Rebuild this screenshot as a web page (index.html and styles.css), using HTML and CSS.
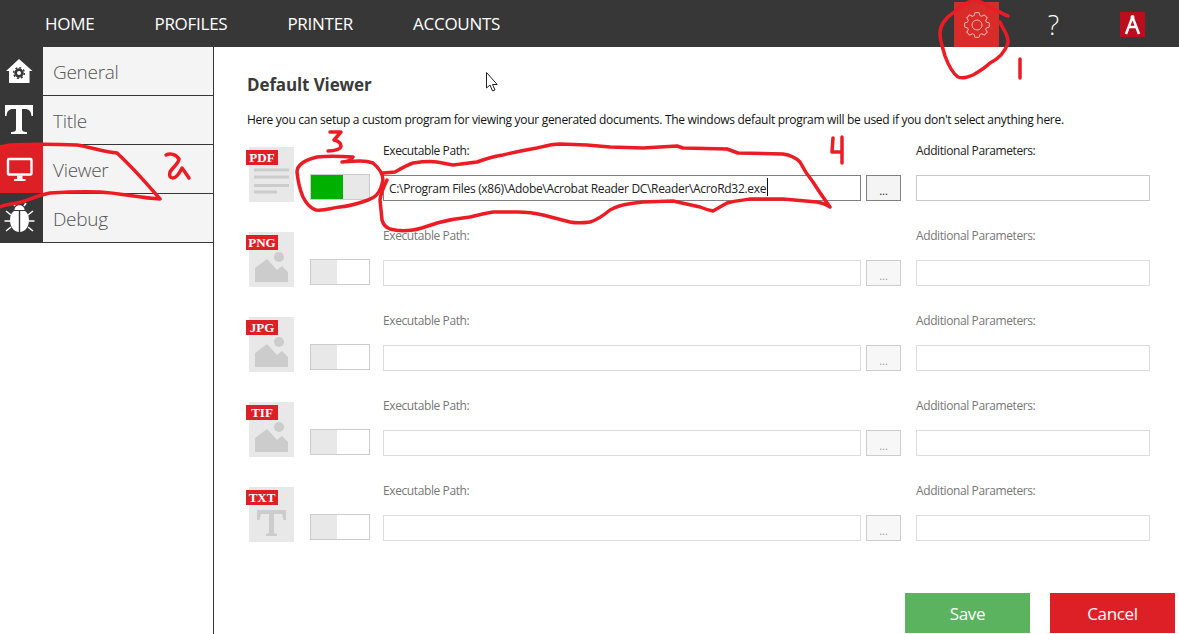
FILE: index.html
```html
<!DOCTYPE html>
<html lang="en">
<head>
<meta charset="utf-8">
<title>Default Viewer</title>
<link rel="stylesheet" href="styles.css">
</head>
<body>
<div class="app">
  <header class="topbar">
    <nav class="nav">
      <a class="nav-link">HOME</a>
      <a class="nav-link">PROFILES</a>
      <a class="nav-link">PRINTER</a>
      <a class="nav-link">ACCOUNTS</a>
    </nav>
    <div class="tools">
      <div class="gear-tile">
        <svg width="26" height="26" viewBox="-13 -13 26 26" class="gear">
          <defs><path id="tooth" d="M-2.87-9.37L-2.17-12.31H2.17L2.87-9.37A9.8 9.8 0 0 1 4.6-8.65"/></defs>
          <use href="#tooth"/>
          <use href="#tooth" transform="rotate(45)"/>
          <use href="#tooth" transform="rotate(90)"/>
          <use href="#tooth" transform="rotate(135)"/>
          <use href="#tooth" transform="rotate(180)"/>
          <use href="#tooth" transform="rotate(225)"/>
          <use href="#tooth" transform="rotate(270)"/>
          <use href="#tooth" transform="rotate(315)"/>
          <circle r="5"/>
        </svg>
      </div>
      <div class="help">?</div>
      <div class="logo">
        <svg width="25" height="25" viewBox="0 0 25 25">
          <path class="logo-a" d="M12.5 5L6 22M12.5 5L19 22M9 15H16"/>
          <circle cx="12.5" cy="5" r="2" fill="#fff"/>
        </svg>
      </div>
    </div>
  </header>
  <div class="body">
    <aside class="sidebar">
      <div class="side-item">
        <div class="side-icon">
          <svg width="43" height="48" viewBox="0 0 43 48">
            <path fill="#fff" d="M19 12L32.5 24H29.5V36H9V24H6Z"/>
            <circle cx="19" cy="26" r="4.2" fill="#373737" stroke="#373737" stroke-width="1"/>
            <circle cx="19" cy="26" r="5.4" fill="none" stroke="#373737" stroke-width="1.4" stroke-dasharray="2 2.2"/>
            <circle cx="19" cy="26" r="2" fill="#fff"/>
          </svg>
        </div>
        <span class="side-label">General</span>
      </div>
      <div class="side-item">
        <div class="side-icon">
          <svg width="43" height="48" viewBox="0 0 43 48">
            <path fill="#fff" d="M5 9H33V20H31.5C31 15 29 13 25 13H22V33C22 35 23 36 27 36V38H11V36C15 36 16 35 16 33V13H13C9 13 7 15 6.5 20H5Z"/>
          </svg>
        </div>
        <span class="side-label">Title</span>
      </div>
      <div class="side-item">
        <div class="side-icon is-active">
          <svg width="43" height="48" viewBox="0 0 43 48">
            <rect x="8" y="14" width="23.5" height="15.5" rx="1" fill="none" stroke="#fff" stroke-width="2.4"/>
            <path fill="#fff" d="M17 30.5H22.5V34H25.5V36H14V34H17Z"/>
          </svg>
        </div>
        <span class="side-label">Viewer</span>
      </div>
      <div class="side-item">
        <div class="side-icon">
          <svg width="43" height="48" viewBox="0 0 43 48">
            <path stroke="#fff" stroke-width="1.6" fill="none" d="M11 21L6 17M10 27H4.5M11 33L6 37M28 21L33 17M29 27H34.5M28 33L33 37M15 12L13 9M24 12L26 9"/>
            <path fill="#fff" d="M14.5 16C14.5 9.5 24.5 9.5 24.5 16Z"/>
            <path fill="#fff" d="M18.8 17V38C13 37.5 10 32 10 26C10 21.5 11.5 18.5 14 17ZM20.2 17V38C26 37.5 29 32 29 26C29 21.5 27.5 18.5 25 17Z"/>
          </svg>
        </div>
        <span class="side-label">Debug</span>
      </div>
    </aside>
    <main class="main">
      <h1 class="title">Default Viewer</h1>
      <p class="intro">Here you can setup a custom program for viewing your generated documents. The windows default program will be used if you don't select anything here.</p>

      <section class="row">
        <div class="tile">
          <span class="badge">PDF</span>
          <svg width="45" height="55" viewBox="0 0 45 55">
            <path class="tile-art" d="M5 21.500H40V24.500H5ZM5 28.500H40V31.500H5ZM5 37H40V40H5ZM5 43.500H28V46.500H5Z"/>
          </svg>
        </div>
        <div class="switch is-on"><span class="switch-thumb"></span></div>
        <div class="path-col">
          <label class="field-label">Executable Path:</label>
          <div class="path-line">
            <input class="field field-path" value="C:\Program Files (x86)\Adobe\Acrobat Reader DC\Reader\AcroRd32.exe">
            <button class="browse">...</button>
          </div>
        </div>
        <div class="param-col">
          <label class="field-label">Additional Parameters:</label>
          <input class="field field-param">
        </div>
      </section>

      <section class="row is-off">
        <div class="tile">
          <span class="badge">PNG</span>
          <svg width="45" height="55" viewBox="0 0 45 55">
            <circle class="tile-art" cx="30" cy="25" r="5"/>
            <path class="tile-art" d="M6 50V36L18 27L28 38L33 34L39 40V50Z"/>
          </svg>
        </div>
        <div class="switch"><span class="switch-thumb"></span></div>
        <div class="path-col">
          <label class="field-label">Executable Path:</label>
          <div class="path-line">
            <input class="field field-path">
            <button class="browse">...</button>
          </div>
        </div>
        <div class="param-col">
          <label class="field-label">Additional Parameters:</label>
          <input class="field field-param">
        </div>
      </section>

      <section class="row is-off">
        <div class="tile">
          <span class="badge">JPG</span>
          <svg width="45" height="55" viewBox="0 0 45 55">
            <circle class="tile-art" cx="30" cy="25" r="5"/>
            <path class="tile-art" d="M6 50V36L18 27L28 38L33 34L39 40V50Z"/>
          </svg>
        </div>
        <div class="switch"><span class="switch-thumb"></span></div>
        <div class="path-col">
          <label class="field-label">Executable Path:</label>
          <div class="path-line">
            <input class="field field-path">
            <button class="browse">...</button>
          </div>
        </div>
        <div class="param-col">
          <label class="field-label">Additional Parameters:</label>
          <input class="field field-param">
        </div>
      </section>

      <section class="row is-off">
        <div class="tile">
          <span class="badge">TIF</span>
          <svg width="45" height="55" viewBox="0 0 45 55">
            <circle class="tile-art" cx="30" cy="25" r="5"/>
            <path class="tile-art" d="M6 50V36L18 27L28 38L33 34L39 40V50Z"/>
          </svg>
        </div>
        <div class="switch"><span class="switch-thumb"></span></div>
        <div class="path-col">
          <label class="field-label">Executable Path:</label>
          <div class="path-line">
            <input class="field field-path">
            <button class="browse">...</button>
          </div>
        </div>
        <div class="param-col">
          <label class="field-label">Additional Parameters:</label>
          <input class="field field-param">
        </div>
      </section>

      <section class="row is-off">
        <div class="tile">
          <span class="badge">TXT</span>
          <svg width="45" height="55" viewBox="0 0 45 55">
            <path class="tile-art" d="M8 23H37V33H34.500L33 27H25V46L28 47V49H17V47L20 46V27H12L10.500 33H8Z"/>
          </svg>
        </div>
        <div class="switch"><span class="switch-thumb"></span></div>
        <div class="path-col">
          <label class="field-label">Executable Path:</label>
          <div class="path-line">
            <input class="field field-path">
            <button class="browse">...</button>
          </div>
        </div>
        <div class="param-col">
          <label class="field-label">Additional Parameters:</label>
          <input class="field field-param">
        </div>
      </section>

      <footer class="actions">
        <button class="action action-save">Save</button>
        <button class="action action-cancel">Cancel</button>
      </footer>
    </main>
  </div>
</div>

<svg class="markup" width="1179" height="634" viewBox="0 0 1179 634">
  <g class="ink">
    <path d="M1008 16C998 12 985 3 975 0C965 2 958 9 953 13C945 18 940 26 940 33C940 42 943 48 945 56C948 64 952 73 958 77C963 79 968 77 973 75C980 71 985 68 990 63C998 59 1005 52 1008 43C1009 35 1003 30 1000 22"/>
    <path d="M1020 59V78"/>
    <path d="M0 147L10 145C30 144 55 144 77 145C90 147 105 152 117 153C130 165 148 185 160 199C140 198 120 193 100 192C80 191 65 192 50 193C35 196 25 202 17 203C10 204 4 205 0 207"/>
    <path d="M166 155C170 153 176 154 179 159C179 163 173 167 170 172C169 176 170 178 173 178C177 178 180 172 182 168C185 172 187 175 189 178"/>
    <path d="M330 132H341L334 140C338 141 341 143 341 146C341 149 335 151 328 151"/>
    <path d="M342 162C345 162 350 161 353 157C340 156 325 156 317 157C305 160 297 164 297 172C298 182 300 190 303 197C306 203 310 208 316 210C325 211 330 208 340 207C350 206 360 203 368 200C374 198 380 195 383 180C383 174 379 168 373 163C365 160 355 161 342 162"/>
    <path d="M383 173L395 172C402 168 407 165 413 163C420 162 430 161 437 162L453 165C460 164 470 163 477 162C485 159 495 156 503 155C515 152 525 150 537 148C545 146 552 144 560 144L587 145L610 147L643 148L677 146L683 148L727 149L738 153L783 154C790 155 796 158 800 162C804 170 808 176 813 182C818 190 825 200 830 207C826 204 822 203 817 202L783 199H750C743 200 735 201 727 203L713 211C708 210 705 209 700 207L673 201L643 202C635 203 628 204 623 205C618 206 614 208 610 210C604 215 597 220 590 222C583 223 575 223 570 222L543 215C535 213 526 212 517 212H493C486 213 478 215 470 217C460 218 448 220 437 223C428 226 420 229 413 230C405 231 397 231 390 229C385 227 383 224 382 220L380 200C381 193 384 186 387 180"/>
    <path d="M833 138L832 152H842M842 137V163"/>
  </g>
  <path class="caret" d="M767.500 178V196"/>
  <path class="pointer" d="M486.500 72.500V88L490 85L492.500 91L495 90L492.500 84.500H497.200Z"/>
</svg>
</body>
</html>
```

FILE: styles.css
```css
* { box-sizing: border-box; }
html, body { margin: 0; height: 100%; }
body {
  font-family: "Open Sans", "Noto Sans", "Liberation Sans", sans-serif;
  background: #fff;
  color: #222;
  overflow: hidden;
}
.app { display: flex; flex-direction: column; height: 634px; }

.topbar {
  height: 47px;
  flex: none;
  display: flex;
  background: #373737;
  color: #fff;
}
.nav { display: flex; align-items: center; gap: 60px; padding-left: 45px; }
.nav-link { font-size: 17px; letter-spacing: -0.27px; }
.tools { margin-left: auto; display: flex; padding-right: 34px; }
.gear-tile {
  width: 45px;
  height: 45px;
  margin-top: 2px;
  background: #d92b27;
  display: flex;
  align-items: center;
  justify-content: center;
}
.gear { fill: none; stroke: #efb5b3; stroke-width: 1; }
.help {
  width: 109px;
  text-align: center;
  font-size: 27px;
  font-weight: 300;
  line-height: 50px;
}
.logo {
  width: 25px;
  height: 25px;
  margin: 12px 0 0 12px;
  background: #bb0d1e;
}
.logo svg { display: block; }
.logo-a { fill: none; stroke: #fff; stroke-width: 2.5; }

.body { flex: 1; display: flex; min-height: 0; }
.sidebar { width: 214px; flex: none; border-right: 1px solid #373737; }
.side-item {
  height: 49px;
  display: flex;
  align-items: center;
  background: #f4f4f4;
  border-bottom: 1px solid #373737;
}
.side-icon { width: 43px; height: 48px; background: #373737; flex: none; }
.side-icon svg { display: block; }
.side-icon.is-active { background: #dd1f26; }
.side-label {
  margin-left: 10px;
  padding-top: 2px;
  font-size: 19px;
  font-weight: 300;
  letter-spacing: -0.3px;
  color: #555;
}

.main { flex: 1; min-width: 0; display: flex; flex-direction: column; padding: 0 29px 1px 33px; }
.title {
  margin: 26px 0 0;
  height: 24px;
  line-height: 24px;
  font-size: 17px;
  font-weight: 700;
  letter-spacing: -0.12px;
  color: #3a3a3a;
}
.intro {
  margin: 14px 0 0;
  height: 18px;
  line-height: 18px;
  font-size: 12px;
  letter-spacing: -0.3px;
  color: #111;
  white-space: nowrap;
}

.row { height: 85px; flex: none; display: flex; padding-left: 2px; }
.row:first-of-type { margin-top: 18px; }
.tile { position: relative; width: 45px; height: 55px; background: #e8e8e8; flex: none; }
.tile svg { display: block; }
.tile-art { fill: #ccc; }
.badge {
  position: absolute;
  left: -3px;
  top: 3px;
  width: 32px;
  height: 15px;
  line-height: 15px;
  text-align: center;
  background: #dd1f26;
  color: #fff;
  font-family: "Liberation Serif", serif;
  font-weight: 700;
  font-size: 13px;
}
.switch {
  width: 60px;
  height: 26px;
  margin: 27px 0 0 16px;
  border: 1px solid #ccc;
  background: #fff;
  flex: none;
}
.switch-thumb { display: block; width: 26px; height: 100%; background: #e8e8e8; }
.switch.is-on { background: #e8e8e8; }
.switch.is-on .switch-thumb { width: 32px; background: #00b000; }

.path-col { width: 518px; margin-left: 13px; flex: none; }
.param-col { width: 234px; margin-left: 15px; flex: none; }
.field-label {
  display: block;
  height: 18px;
  margin: -5px 0 15px;
  line-height: 18px;
  font-size: 12px;
  letter-spacing: -0.4px;
  color: #222;
}
.path-line { display: flex; gap: 5px; }
.field {
  display: block;
  height: 26px;
  border: 1px solid #c8c8c8;
  border-radius: 0;
  background: #fff;
  padding: 0 5px;
  margin: 0;
  outline: 0;
  font: inherit;
  font-size: 12px;
  letter-spacing: -0.32px;
  color: #222;
}
.field-path { width: 478px; border-color: #808080; }
.field-param { width: 234px; }
.browse {
  width: 35px;
  height: 26px;
  padding: 4px 0 0;
  margin: 0;
  border: 1px solid #808080;
  border-radius: 0;
  background: #f4f4f4;
  font: inherit;
  font-size: 11px;
  color: #222;
}
.row.is-off .field-label { color: #777; }
.row.is-off .field { border-color: #ddd; }
.row.is-off .browse { border-color: #ccc; background: #f7f7f7; color: #999; }

.actions { margin-top: auto; display: flex; justify-content: flex-end; gap: 20px; margin-right: -25px; }
.action {
  width: 125px;
  height: 40px;
  padding: 0;
  border: 0;
  color: #fff;
  font: inherit;
  font-size: 17px;
  letter-spacing: -0.35px;
}
.action-save { background: #5cb35f; }
.action-cancel { background: #dd1f26; }

.markup { position: absolute; left: 0; top: 0; pointer-events: none; }
.ink { fill: none; stroke: #ec1c24; stroke-width: 3.5; stroke-linecap: round; stroke-linejoin: round; }
.caret { stroke: #111; stroke-width: 1; fill: none; }
.pointer { fill: #fff; stroke: #222; stroke-width: 1; }
```
